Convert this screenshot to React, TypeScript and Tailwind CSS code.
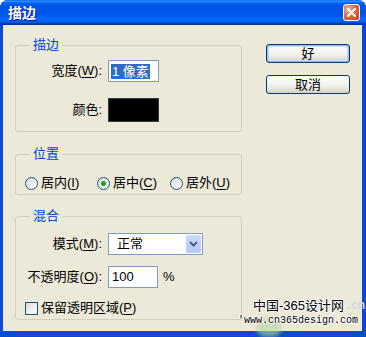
import type { ReactNode } from "react";

const Key = ({ children }: { children: ReactNode }) => (
  <span className="underline underline-offset-[2px]">{children}</span>
);

const Radio = ({ checked, children, className }: { checked?: boolean; children: ReactNode; className?: string }) => (
  <label className={`flex items-center gap-[3px] ${className ?? ""}`}>
    <span className="flex h-[13px] w-[13px] items-center justify-center rounded-full border border-[#1c5180] bg-[linear-gradient(135deg,#dcdcd7,#ffffff)]">
      {checked && <span className="h-[5px] w-[5px] rounded-full bg-[#21a121]" />}
    </span>
    <span>{children}</span>
  </label>
);

const XpButton = ({ children, primary }: { children: ReactNode; primary?: boolean }) => (
  <button
    className={`h-[19px] w-[84px] rounded-[3px] border border-[#003c74] bg-[linear-gradient(#ffffff,#f0f0ea_60%,#d6d0c5)] leading-[15px] text-black ${
      primary ? "shadow-[inset_0_0_0_1px_#9db8f1,inset_0_0_0_2px_#c6d7f7]" : ""
    }`}
  >
    {children}
  </button>
);

const Group = ({ title, className, children }: { title: string; className?: string; children: ReactNode }) => (
  <fieldset className={`rounded-[3px] border border-[#d0d0bf] ${className ?? ""}`}>
    <legend className="ml-[14px] px-[3px] leading-[14px] text-[#0046d5]">{title}</legend>
    {children}
  </fieldset>
);

export default function App() {
  return (
    <div
      className="flex h-[337px] w-[366px] flex-col overflow-hidden rounded-t-[8px] bg-[#0a4bd6] text-[13px] text-black"
      style={{ fontFamily: '"Liberation Sans", "Noto Sans CJK SC", sans-serif' }}
    >
      <div className="flex h-[25px] shrink-0 items-center justify-between bg-[linear-gradient(#0058ee,#3593ff_4%,#288eff_6%,#127dff_8%,#036ffc_10%,#0262ee_14%,#0057e5_20%,#0054e3_24%,#0055eb_56%,#005bf5_66%,#026afe_76%,#0062ef_86%,#0052d6_92%,#0040ab_94%,#003092_100%)] pl-[8px] pr-[6px]">
        <span className="text-[14px] font-bold leading-[16px] text-white [text-shadow:1px_1px_#0f1089]">描边</span>
        <span className="flex h-[17px] w-[17px] items-center justify-center rounded-[3px] border border-white bg-[radial-gradient(circle_at_30%_30%,#f3b8a0,#e06a43_45%,#c2401a)]">
          <svg width="9" height="9" viewBox="0 0 9 9">
            <path d="M1 1 L8 8 M8 1 L1 8" stroke="white" strokeWidth="2" strokeLinecap="round" />
          </svg>
        </span>
      </div>

      <div className="relative mb-[6px] ml-[3px] mr-[4px] flex flex-1 bg-[#ece9d8] pl-[12px]">
        <div className="flex w-[227px] flex-col pt-[13px]">
          <Group title="描边">
            <div className="flex flex-col gap-[16px] pb-[9px] pt-[8px]">
              <div className="flex h-[22px] items-center">
                <span className="w-[86px] text-right">
                  宽度(<Key>W</Key>):
                </span>
                <div className="ml-[6px] flex h-[22px] w-[51px] items-center border border-[#7f9db9] bg-white pl-[2px]">
                  <span className="bg-[#316ac5] px-[1px] leading-[15px] text-white">1 像素</span>
                </div>
              </div>
              <div className="flex h-[24px] items-center">
                <span className="w-[86px] text-right">颜色:</span>
                <div className="ml-[6px] h-[24px] w-[51px] border border-[#3a3a3a] bg-black" />
              </div>
            </div>
          </Group>

          <Group title="位置" className="mt-[15px]">
            <div className="mb-[3px] mt-[14px] flex h-[16px] items-center pl-[9px]">
              <Radio className="w-[72px]">
                居内(<Key>I</Key>)
              </Radio>
              <Radio checked className="w-[73px]">
                居中(<Key>C</Key>)
              </Radio>
              <Radio>
                居外(<Key>U</Key>)
              </Radio>
            </div>
          </Group>

          <Group title="混合" className="mt-[14px]">
            <div className="flex flex-col pb-[3px] pt-[10px]">
              <div className="flex h-[22px] items-center">
                <span className="w-[86px] text-right">
                  模式(<Key>M</Key>):
                </span>
                <div className="ml-[6px] flex h-[22px] w-[95px] items-center justify-between border border-[#7f9db9] bg-white pl-[8px] pr-[1px]">
                  <span>正常</span>
                  <span className="flex h-[18px] w-[15px] items-center justify-center rounded-[2px] bg-[linear-gradient(#c9daf9,#b4c8f6)]">
                    <svg width="9" height="6" viewBox="0 0 9 6">
                      <path d="M1 1 L4.5 4.5 L8 1" stroke="#4d6185" strokeWidth="2" fill="none" />
                    </svg>
                  </span>
                </div>
              </div>
              <div className="mt-[11px] flex h-[22px] items-center">
                <span className="w-[86px] text-right">
                  不透明度(<Key>O</Key>):
                </span>
                <div className="ml-[6px] flex h-[22px] w-[50px] items-center border border-[#7f9db9] bg-white pl-[3px]">
                  100
                </div>
                <span className="ml-[5px]">%</span>
              </div>
              <label className="mt-[12px] flex h-[16px] items-center gap-[3px] pl-[9px]">
                <span className="h-[13px] w-[13px] border border-[#1c5180] bg-[linear-gradient(135deg,#dcdcd7,#ffffff)]" />
                <span>
                  保留透明区域(<Key>P</Key>)
                </span>
              </label>
            </div>
          </Group>
        </div>

        <div className="ml-[24px] flex w-[84px] flex-col gap-[12px] pt-[19px]">
          <XpButton primary>好</XpButton>
          <XpButton>取消</XpButton>
        </div>

        <div className="pointer-events-none absolute bottom-[-6px] right-[-4px] h-[40px] w-[128px]">
          <span className="absolute right-[1px] top-[1px] text-[12px] font-bold leading-[14px] text-[#d3d6e0]">.cn</span>
          <span className="absolute left-[18px] top-[20px] h-[20px] w-[26px] rounded-full bg-[#b9d5a8] opacity-60 blur-[2px]" />
          <span
            className="absolute left-[15px] top-[2px] text-[13px] leading-[14px] text-black"
            style={{ textShadow: "1px 0 #fff, -1px 0 #fff, 0 1px #fff, 0 -1px #fff" }}
          >
            中国-365设计网
          </span>
          <span
            className="absolute left-0 top-[18px] text-[10px] leading-[11px] text-black"
            style={{
              fontFamily: '"Liberation Mono", monospace',
              textShadow: "1px 0 #fff, -1px 0 #fff, 0 1px #fff, 0 -1px #fff",
            }}
          >
            'www.cn365design.com
          </span>
        </div>
      </div>
    </div>
  );
}
